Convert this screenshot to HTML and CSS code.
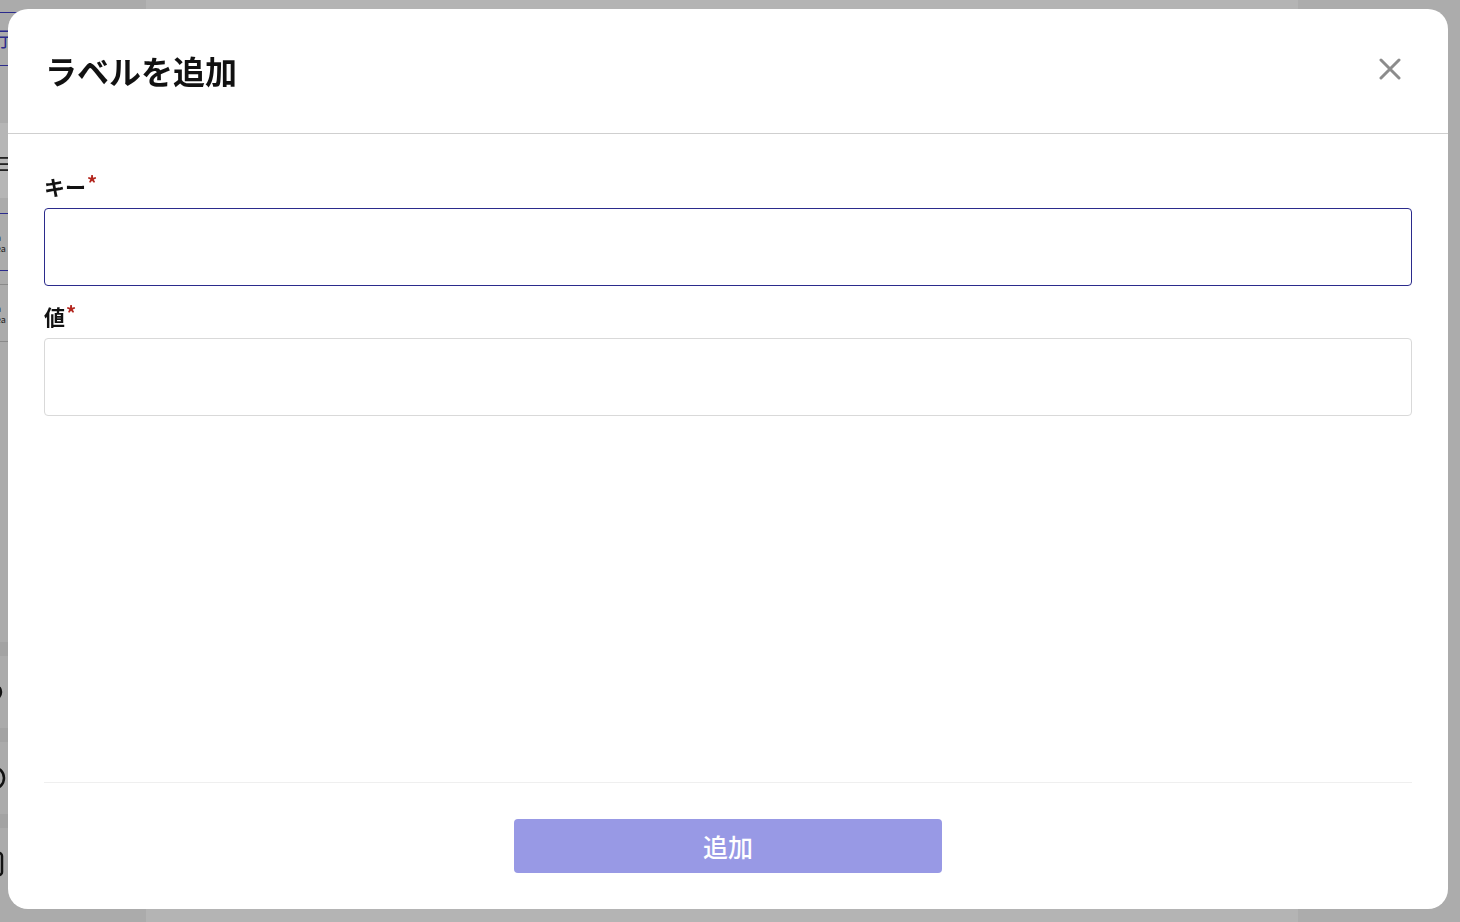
FILE: index.html
```html
<!DOCTYPE html>
<html lang="ja">
<head>
    <meta charset="UTF-8">
    <meta name="viewport" content="width=device-width, initial-scale=1.0">
    <title>ラベルを追加</title>
    <link rel="stylesheet" href="styles.css">
</head>
<body>
<div class="page">
    <aside class="sidebar">
        <div class="side-link">行</div>
        <div class="side-band">≡</div>
        <div class="side-row active">a<br>ea</div>
        <div class="side-row">a<br>ea</div>
        <div class="side-nav">
            <div class="nav-item">
                <svg width="30" height="30" viewBox="0 0 30 30"><circle cx="15" cy="15" r="8" stroke="#111" stroke-width="2.5" fill="none" stroke-dasharray="6 3"/></svg>
            </div>
            <div class="nav-item">
                <svg width="30" height="30" viewBox="0 0 30 30"><circle cx="15" cy="15" r="11" stroke="#111" stroke-width="2.5" fill="none"/></svg>
            </div>
            <div class="nav-item">
                <svg width="30" height="30" viewBox="0 0 30 30"><rect x="5" y="4" width="19" height="22" rx="3" stroke="#111" stroke-width="2.5" fill="none"/><path d="M10 11h10M10 16h10" stroke="#111" stroke-width="2"/></svg>
            </div>
        </div>
    </aside>
    <main class="content"></main>
    <div class="rightside"></div>
</div>

<div class="overlay">
    <div class="modal" role="dialog" aria-labelledby="modal-title">
        <div class="modal-header">
            <h2 id="modal-title">ラベルを追加</h2>
            <button class="close-btn" aria-label="閉じる">
                <svg width="22" height="22" viewBox="0 0 22 22">
                    <path d="M2 2 L20 20 M20 2 L2 20" stroke="#8c8c8c" stroke-width="3" stroke-linecap="round" fill="none"/>
                </svg>
            </button>
        </div>

        <div class="modal-body">
            <label class="field-label" for="key">キー<span class="req">*</span></label>
            <input class="field-input focused" type="text" id="key">

            <label class="field-label second" for="value">値<span class="req">*</span></label>
            <input class="field-input" type="text" id="value">
        </div>

        <div class="modal-footer">
            <button class="submit-btn" disabled>追加</button>
        </div>
    </div>
</div>
</body>
</html>
```

FILE: styles.css
```css
* {
    box-sizing: border-box;
}
body {
    margin: 0;
    font-family: "Noto Sans CJK JP", "Noto Sans", sans-serif;
    background: #b1b1b1;
    height: 922px;
    overflow: hidden;
}
.page {
    display: flex;
    height: 100%;
}

/* page behind the dialog */
.sidebar {
    width: 146px;
    background: #ababab;
    padding-top: 12px;
    color: #222;
}
.side-link {
    border-top: 1px solid #2b2b8c;
    border-bottom: 1px solid #2b2b8c;
    color: #2b2b8c;
    height: 54px;
    padding-top: 14px;
    font-size: 20px;
    line-height: 24px;
    margin-left: -10px;
}
.side-band {
    margin-top: 57px;
    height: 75px;
    background: #b6b6b6;
    font-size: 28px;
    line-height: 28px;
    padding-top: 26px;
    margin-left: -12px;
}
.side-row {
    border-top: 1px solid #8a8a8a;
    border-bottom: 1px solid #8a8a8a;
    height: 58px;
    font-size: 9px;
    line-height: 11px;
    padding-top: 18px;
    margin-left: -4px;
}
.side-row.active {
    margin-top: 15px;
    border-color: #2b2b8c;
    margin-bottom: 13px;
}
.side-nav {
    margin-top: 300px;
    display: flex;
    flex-direction: column;
}
.nav-item {
    height: 86px;
    border-top: 14px solid #a3a3a3;
    display: flex;
    align-items: center;
    margin-left: -22px;
}
.content {
    flex: 1;
    background: #b4b4b4;
}
.rightside {
    width: 162px;
    background: #acacac;
}

/* dialog */
.overlay {
    position: fixed;
    inset: 0;
    padding: 9px 12px 13px 8px;
    display: flex;
}
.modal {
    flex: 1;
    background: #fff;
    border-radius: 20px;
    display: flex;
    flex-direction: column;
    overflow: hidden;
}
.modal-header {
    height: 125px;
    border-bottom: 1px solid #cfcfcf;
    display: flex;
    align-items: center;
    justify-content: space-between;
    padding: 0 36px 0 37px;
}
.modal-header h2 {
    margin: 0 0 2px;
    font-size: 32px;
    font-weight: 700;
    color: #111;
    line-height: 40px;
}
.close-btn {
    width: 44px;
    height: 44px;
    border: none;
    background: none;
    padding: 0;
    margin-bottom: 4px;
    display: flex;
    align-items: center;
    justify-content: center;
    cursor: pointer;
}
.modal-body {
    flex: 1;
    display: flex;
    flex-direction: column;
    padding: 37px 36px 0;
}
.field-label {
    font-size: 21px;
    font-weight: 700;
    line-height: 30px;
    color: #111;
    margin-bottom: 7px;
}
.field-label.second {
    margin-top: 15px;
}
.req {
    color: #b3261e;
    font-size: 20px;
    font-weight: 700;
    line-height: 0;
    vertical-align: 4px;
    margin-left: 1px;
}
.field-input {
    height: 78px;
    border: 1px solid #d9d9d9;
    border-radius: 4px;
    font-size: 18px;
    padding: 0 14px;
    outline: none;
    width: 100%;
}
.field-input.focused {
    border-color: #2b2b8c;
}
.modal-footer {
    margin: 0 36px;
    border-top: 1px solid #efefef;
    padding: 36px 0;
    display: flex;
    justify-content: center;
}
.submit-btn {
    width: 428px;
    height: 54px;
    border: none;
    border-radius: 4px;
    background: #9899e5;
    color: #fff;
    font-family: "Noto Sans CJK JP", sans-serif;
    font-size: 25px;
    font-weight: 500;
}
```
